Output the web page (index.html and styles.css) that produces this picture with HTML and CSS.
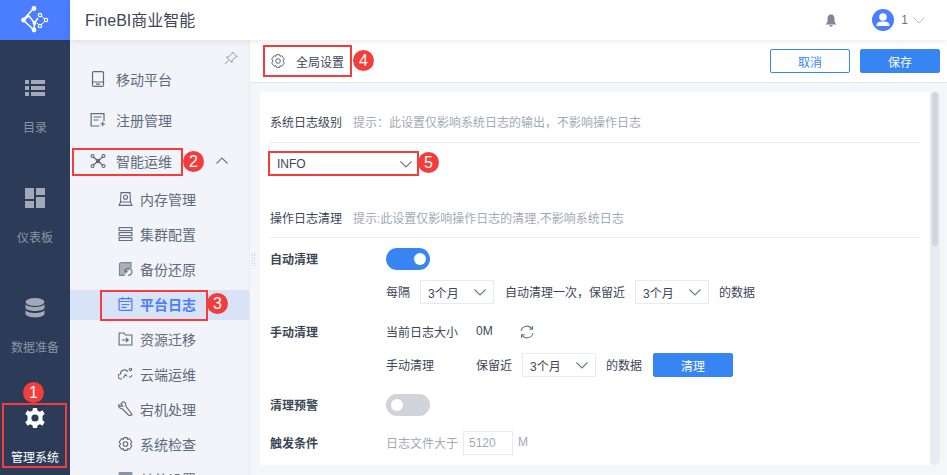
FILE: index.html
```html
<!DOCTYPE html>
<html lang="zh-CN">
<head>
    <meta charset="UTF-8">
    <title>FineBI商业智能</title>
    <link rel="stylesheet" href="styles.css">
</head>
<body>

    <div class="app">
        <aside class="rail">
            <div class="logo">
                <svg width="28" height="28" viewBox="0 0 28 28" fill="none" stroke="#fff">
                    <path d="M13 2 L2 14 L13 24 M2 14 L8 10 L13.500 17 L17 12 M13.500 17 L13 24" stroke-width="1.600"/>
                    <path d="M17 8 L19 9 L25 14 L19 20 L16 17" stroke-width="1"/>
                    <g fill="#fff" stroke="none">
                        <circle cx="13" cy="2.500" r="2.400"/>
                        <circle cx="2.500" cy="14" r="2.400"/>
                        <circle cx="13" cy="24" r="2.400"/>
                        <circle cx="13.500" cy="17" r="2"/>
                    </g>
                    <g fill="#4a7dff" stroke-width="1.200">
                        <circle cx="19" cy="9" r="1.700"/>
                        <circle cx="25" cy="14" r="1.700"/>
                        <circle cx="19" cy="20" r="1.700"/>
                    </g>
                </svg>
            </div>
            <a class="rail-item">
                <svg width="20" height="16" viewBox="0 0 20 16" fill="#a3a9b6">
                    <rect x="0" y="0" width="4" height="4"/><rect x="6" y="0" width="14" height="4"/>
                    <rect x="0" y="6" width="4" height="4"/><rect x="6" y="6" width="14" height="4"/>
                    <rect x="0" y="12" width="4" height="4"/><rect x="6" y="12" width="14" height="4"/>
                </svg>
                <span>目录</span>
            </a>
            <a class="rail-item">
                <svg width="20" height="20" viewBox="0 0 20 20" fill="#a3a9b6">
                    <rect x="0" y="0" width="9" height="11"/><rect x="11" y="0" width="9" height="7"/>
                    <rect x="0" y="13" width="9" height="7"/><rect x="11" y="9" width="9" height="11"/>
                </svg>
                <span>仪表板</span>
            </a>
            <a class="rail-item">
                <svg width="20" height="20" viewBox="0 0 20 20" fill="#a3a9b6">
                    <ellipse cx="10" cy="4" rx="9.500" ry="4"/>
                    <path d="M0.500 6 C2 10 18 10 19.500 6 V10 C18 14 2 14 0.500 10 Z"/>
                    <path d="M0.500 12 C2 16 18 16 19.500 12 V16 C18 20.500 2 20.500 0.500 16 Z"/>
                </svg>
                <span>数据准备</span>
            </a>
            <a class="rail-item active">
                <svg width="20" height="20" viewBox="0 0 20 20">
                    <path fill="#fff" d="M8 0 H12 L12.600 2.800 L15 3.800 L17.500 2.300 L19.700 6 L17.500 7.800 V12.200 L19.700 14 L17.500 17.700 L15 16.200 L12.600 17.200 L12 20 H8 L7.400 17.200 L5 16.200 L2.500 17.700 L0.300 14 L2.500 12.200 V7.800 L0.300 6 L2.500 2.300 L5 3.800 L7.400 2.800 Z"/>
                    <circle cx="10" cy="10" r="3.600" fill="#2c3b57"/>
                </svg>
                <span>管理系统</span>
            </a>
        </aside>

        <div class="content">
            <header class="topbar">
                <div class="brand">FineBI商业智能</div>
                <svg class="bell" width="12" height="13" viewBox="0 0 12 13" fill="#7e8796">
                    <path d="M6 0.500 C8.500 0.500 9.500 2.500 9.500 5 V8 L11.500 10.500 H0.500 L2.500 8 V5 C2.500 2.500 3.500 0.500 6 0.500 Z"/>
                    <rect x="4.500" y="11" width="3" height="1.500"/>
                </svg>
                <div class="avatar">
                    <svg width="22" height="22" viewBox="0 0 22 22" fill="#fff">
                        <circle cx="11" cy="8" r="3.800"/>
                        <path d="M4.500 17 C4.500 13 7.500 12.500 11 12.500 C14.500 12.500 17.500 13 17.500 17 Z"/>
                    </svg>
                </div>
                <span class="user-name">1</span>
                <svg class="user-arrow" width="12" height="7" viewBox="0 0 12 7" fill="none" stroke="#b9bfc9"><path d="M0.500 0.500 L6 6 L11.500 0.500"/></svg>
            </header>

            <div class="body-row">
                <nav class="side-menu">
                    <svg class="pin" width="14" height="14" viewBox="0 0 14 14" fill="none" stroke="#8a93a3">
                        <path d="M8.500 1 L13 5.500 L11.500 6 L8 9.500 L8 11.500 L2.500 6 L4.500 6 L8 2.500 Z M4.500 9.500 L1 13"/>
                    </svg>
                    <a class="menu-item">
                        <svg width="14" height="16" viewBox="0 0 14 16" fill="none" stroke="#5f6a7e" stroke-width="1.200"><rect x="1.500" y="0.600" width="11" height="14.800" rx="1.500"/><path d="M1.500 11 H12.500 M5 13.200 H9"/></svg>
                        <span>移动平台</span>
                    </a>
                    <a class="menu-item">
                        <svg width="15" height="14" viewBox="0 0 15 14" fill="none" stroke="#5f6a7e" stroke-width="1.200"><path d="M9 13 H0.600 V0.600 H13.500 V8 M3 4 H11 M3 7 H8 M10 11 H14.500 M12.200 8.800 V13.200"/></svg>
                        <span>注册管理</span>
                    </a>
                    <a class="menu-item">
                        <svg width="16" height="14" viewBox="0 0 16 14" fill="none" stroke="#5f6a7e" stroke-width="1.100"><path d="M3 2.500 L13 11.500 M13 2.500 L3 11.500"/><circle cx="2.500" cy="2" r="1.500"/><circle cx="13.500" cy="2" r="1.500"/><circle cx="2.500" cy="12" r="1.500"/><circle cx="13.500" cy="12" r="1.500"/><circle cx="8" cy="7" r="1.600" fill="#5f6a7e"/></svg>
                        <span>智能运维</span>
                        <svg class="menu-arrow" width="12" height="7" viewBox="0 0 12 7" fill="none" stroke="#6d7686" stroke-width="1.100"><path d="M0.500 6.500 L6 1 L11.500 6.500"/></svg>
                    </a>
                    <a class="sub-item">
                        <svg width="14" height="14" viewBox="0 0 14 14" fill="none" stroke="#5f6a7e" stroke-width="1.100"><path d="M2.500 0.600 H11.500 L12 10 H2 Z M0.600 13.400 L2 10 H12 L13.400 13.400 Z"/><circle cx="7" cy="5.300" r="2"/></svg>
                        <span>内存管理</span>
                    </a>
                    <a class="sub-item">
                        <svg width="14" height="14" viewBox="0 0 14 14" fill="none" stroke="#5f6a7e" stroke-width="1.100"><rect x="0.600" y="0.600" width="12.800" height="3"/><rect x="0.600" y="5.600" width="12.800" height="3"/><rect x="0.600" y="10.600" width="12.800" height="3"/></svg>
                        <span>集群配置</span>
                    </a>
                    <a class="sub-item">
                        <svg width="14" height="14" viewBox="0 0 14 14" fill="none" stroke="#7d8594" stroke-width="1.100"><path d="M6 13.400 H1 V1.500 L3 0.600 H12.500 V6" fill="#aab0bb"/><path d="M6.500 9.500 A3.500 3.500 0 1 1 9.500 13.200 M6.500 7.500 V9.800 H8.800" stroke="#5f6a7e"/></svg>
                        <span>备份还原</span>
                    </a>
                    <a class="sub-item active">
                        <svg width="14" height="14" viewBox="0 0 14 14" fill="none" stroke="#4a7dff" stroke-width="1.200"><rect x="0.600" y="1.600" width="12.800" height="11.800" rx="1"/><path d="M0.600 4.500 H13.400 M3 7.500 H11 M3 10.300 H8 M4 0 V2.500 M10 0 V2.500"/></svg>
                        <span>平台日志</span>
                    </a>
                    <a class="sub-item">
                        <svg width="14" height="14" viewBox="0 0 14 14" fill="none" stroke="#5f6a7e" stroke-width="1.100"><path d="M0.600 13 V1 H5.500 L7 3 H13.400 V13 Z M3.500 8 H9.500 M7.500 6 L9.800 8 L7.500 10"/></svg>
                        <span>资源迁移</span>
                    </a>
                    <a class="sub-item">
                        <svg width="15" height="14" viewBox="0 0 15 14" fill="none" stroke="#5f6a7e" stroke-width="1.100"><path d="M4 12 H3 A2.500 2.500 0 0 1 2.500 7 A4 4 0 0 1 10 5 M5 11 L7.500 7.500 L9 9.500 M11 10 A2.500 2.500 0 0 0 14 8"/><circle cx="12.500" cy="2.500" r="1.200"/></svg>
                        <span>云端运维</span>
                    </a>
                    <a class="sub-item">
                        <svg width="15" height="15" viewBox="0 0 15 15" fill="none" stroke="#5f6a7e" stroke-width="1.100"><path d="M5 0.800 L2.800 3 L4.800 5 L2.500 5.500 L0.800 3.800 C0.200 6 1.800 7.800 4 7.500 L10.500 14 C11.500 14.800 13 14.500 14 13.500 L7.800 5 C8 2 6.500 0.500 5 0.800 Z"/></svg>
                        <span>宕机处理</span>
                    </a>
                    <a class="sub-item">
                        <svg width="14" height="14" viewBox="0 0 14 14" fill="none" stroke="#5f6a7e" stroke-width="1.100"><path d="M5.500 0.600 H8.500 L9 2.300 L10.800 1.700 L13.300 5 L12 7 L13.300 9 L10.800 12.300 L9 11.700 L8.500 13.400 H5.500 L5 11.700 L3.200 12.300 L0.700 9 L2 7 L0.700 5 L3.200 1.700 L5 2.300 Z"/><circle cx="7" cy="7" r="2.300"/></svg>
                        <span>系统检查</span>
                    </a>
                    <a class="sub-item">
                        <svg width="14" height="14" viewBox="0 0 14 14" fill="#8a93a3"><rect x="0" y="0" width="14" height="14" rx="1"/></svg>
                        <span>其他设置</span>
                    </a>
                </nav>

                <main class="main">
                    <div class="main-head">
                        <div class="head-title">
                            <svg width="14" height="14" viewBox="0 0 14 14" fill="none" stroke="#5f6a7e" stroke-width="1"><path d="M5.500 0.600 H8.500 L9 2.300 L10.800 1.700 L13.300 5 L12 7 L13.300 9 L10.800 12.300 L9 11.700 L8.500 13.400 H5.500 L5 11.700 L3.200 12.300 L0.700 9 L2 7 L0.700 5 L3.200 1.700 L5 2.300 Z"/><circle cx="7" cy="7" r="2.300"/></svg>
                            <span>全局设置</span>
                        </div>
                        <button class="btn btn-cancel">取消</button>
                        <button class="btn btn-save">保存</button>
                    </div>

                    <div class="panel-wrap">
                        <div class="grip"></div>
                        <section class="panel">
                            <div class="section-title">
                                <span>系统日志级别</span>
                                <span class="hint">提示&#65306;此设置仅影响系统日志的输出&#65292;不影响操作日志</span>
                            </div>
                            <div class="select select-level">
                                <span>INFO</span>
                                <svg width="12" height="7" viewBox="0 0 12 7" fill="none" stroke="#6d7686" stroke-width="1.100"><path d="M0.500 0.500 L6 6 L11.500 0.500"/></svg>
                            </div>

                            <div class="section-title second">
                                <span>操作日志清理</span>
                                <span class="hint">提示:此设置仅影响操作日志的清理,不影响系统日志</span>
                            </div>

                            <div class="form-row row-auto">
                                <label>自动清理</label>
                                <div class="toggle on"></div>
                            </div>
                            <div class="form-row row-every">
                                <label></label>
                                <span class="w-every">每隔</span>
                                <div class="select select-month"><span>3个月</span><svg width="12" height="7" viewBox="0 0 12 7" fill="none" stroke="#6d7686" stroke-width="1.100"><path d="M0.500 0.500 L6 6 L11.500 0.500"/></svg></div>
                                <span class="w-once">自动清理一次&#65292;保留近</span>
                                <div class="select select-month"><span>3个月</span><svg width="12" height="7" viewBox="0 0 12 7" fill="none" stroke="#6d7686" stroke-width="1.100"><path d="M0.500 0.500 L6 6 L11.500 0.500"/></svg></div>
                                <span class="w-data">的数据</span>
                            </div>
                            <div class="form-row row-size">
                                <label>手动清理</label>
                                <span class="w-col">当前日志大小</span>
                                <span class="w-size">0M</span>
                                <svg width="14" height="14" viewBox="0 0 14 14" fill="none" stroke="#6d7686" stroke-width="1.100"><path d="M1 6 A6 6 0 0 1 12 4 M13 8 A6 6 0 0 1 2 10 M12.500 1 V4.300 H9.300 M1.500 13 V9.700 H4.700"/></svg>
                            </div>
                            <div class="form-row row-manual">
                                <label></label>
                                <span class="w-col">手动清理</span>
                                <span class="w-keep">保留近</span>
                                <div class="select select-month"><span>3个月</span><svg width="12" height="7" viewBox="0 0 12 7" fill="none" stroke="#6d7686" stroke-width="1.100"><path d="M0.500 0.500 L6 6 L11.500 0.500"/></svg></div>
                                <span class="w-data">的数据</span>
                                <button class="btn btn-clean">清理</button>
                            </div>
                            <div class="form-row row-warn">
                                <label>清理预警</label>
                                <div class="toggle"></div>
                            </div>
                            <div class="form-row row-trigger">
                                <label>触发条件</label>
                                <span class="w-file">日志文件大于</span>
                                <div class="size-input">5120</div>
                                <span>M</span>
                            </div>
                        </section>
                        <div class="scrollbar"><div class="thumb"></div></div>
                    </div>
                </main>
            </div>
        </div>

        <!-- annotations over the screenshot -->
        <div class="mark mark-gear"></div><div class="num num-1">1</div>
        <div class="mark mark-ops"></div><div class="num num-2">2</div>
        <div class="mark mark-log"></div><div class="num num-3">3</div>
        <div class="mark mark-global"></div><div class="num num-4">4</div>
        <div class="mark mark-info"></div><div class="num num-5">5</div>
    </div>

</body>
</html>
```

FILE: styles.css
```css
* {
    box-sizing: border-box;
}
html, body {
    margin: 0;
    padding: 0;
    height: 100%;
    overflow: hidden;
}
body {
    font-family: "Liberation Sans", "Noto Sans CJK SC", sans-serif;
    font-size: 12px;
    color: #3d4657;
}
.app {
    position: relative;
    display: flex;
    height: 475px;
    overflow: hidden;
}

/* left rail */
.rail {
    width: 70px;
    flex: none;
    background: #2c3b57;
}
.logo {
    height: 40px;
    background: #4a7dff;
    display: flex;
    align-items: center;
    justify-content: center;
}
.rail-item {
    height: 110px;
    padding-top: 38px;
    display: flex;
    flex-direction: column;
    align-items: center;
    color: #8d95a5;
}
.rail-item svg {
    height: 20px;
}
.rail-item span {
    margin-top: 22px;
    line-height: 17px;
}
.rail-item.active {
    color: #fff;
}

/* top bar */
.content {
    flex: 1;
    display: flex;
    flex-direction: column;
    min-width: 0;
}
.topbar {
    height: 40px;
    flex: none;
    display: flex;
    align-items: center;
    background: #fff;
    box-shadow: 0 1px 6px rgba(40, 50, 70, 0.12);
    position: relative;
    z-index: 2;
    padding-left: 15px;
}
.brand {
    font-size: 16px;
    flex: 1;
    color: #3d4657;
    padding-bottom: 2px;
}
.bell {
    margin-right: 35px;
}
.avatar {
    width: 22px;
    height: 22px;
    border-radius: 50%;
    background: #4a7dff;
    margin-right: 7px;
}
.user-name {
    color: #6b7484;
    margin-right: 5px;
}
.user-arrow {
    margin-right: 22px;
}

/* second level menu */
.body-row {
    flex: 1;
    display: flex;
    min-height: 0;
}
.side-menu {
    width: 179px;
    flex: none;
    background: #f2f4f9;
    position: relative;
    padding-top: 18px;
}
.pin {
    position: absolute;
    top: 11px;
    right: 11px;
}
.side-menu a {
    display: flex;
    align-items: center;
    color: #5f6a7e;
}
.menu-item {
    height: 41px;
    font-size: 14px;
    padding-left: 20px;
}
.menu-item svg:first-child {
    width: 16px;
    margin-right: 10px;
}
.menu-arrow {
    margin-left: 44px;
}
.sub-item {
    height: 35px;
    font-size: 14px;
    padding-left: 48px;
}
.sub-item svg {
    width: 15px;
    margin-right: 7px;
}
.side-menu a.active {
    background: #d8e3f8;
    color: #4a7dff;
    font-weight: bold;
    height: 30px;
    margin: 3.500px 0 1.500px;
    padding-bottom: 2px;
}

/* main */
.main {
    flex: 1;
    min-width: 0;
    display: flex;
    flex-direction: column;
    background: #f5f6f9;
    border-left: 1px solid #e6e9ef;
}
.main-head {
    height: 43px;
    flex: none;
    background: #fff;
    border-bottom: 1px solid #e4e7ed;
    display: flex;
    align-items: center;
    padding: 0 7px 0 21px;
}
.head-title {
    flex: 1;
    display: flex;
    align-items: center;
    gap: 11px;
    color: #3d4657;
}
.btn {
    font: inherit;
    height: 24px;
    width: 80px;
    border-radius: 2px;
    border: 1px solid #3685f2;
    background: #3685f2;
    color: #fff;
    padding: 0;
}
.btn-cancel {
    background: #fff;
    color: #3685f2;
    margin-right: 10px;
}
.panel-wrap {
    flex: 1;
    position: relative;
    display: flex;
    padding: 9px 7px 10px 10px;
    min-height: 0;
}
.grip {
    position: absolute;
    left: 1px;
    top: 169px;
    width: 5px;
    height: 14px;
    background-image: radial-gradient(#a7adb8 0.6px, transparent 0.7px);
    background-size: 2.500px 2.500px;
}
.panel {
    flex: 1;
    background: #fff;
    padding: 0 10px;
    min-width: 0;
}
.scrollbar {
    width: 10px;
    flex: none;
    background: #e9ebf0;
    border-radius: 5px;
    padding: 0 2px;
}
.thumb {
    height: 154px;
    background: #d3d6dd;
    border-radius: 3px;
}

/* sections */
.section-title {
    height: 51px;
    padding-top: 22px;
    line-height: 18px;
    border-bottom: 1px solid #e9ebef;
    display: flex;
    gap: 11px;
}
.section-title.second {
    height: 45px;
    padding-top: 17px;
    margin-top: 17px;
}
.hint {
    color: #a2a9b6;
}
.select {
    border: 1px solid #e8eaee;
    height: 24px;
    background: #fff;
    display: flex;
    align-items: center;
    justify-content: space-between;
    padding: 0 7px 0 7px;
    flex: none;
}
.select-level {
    width: 148px;
    margin-top: 9px;
    border: 0;
    padding-right: 6px;
}
.select-month {
    width: 74px;
}
.form-row {
    display: flex;
    align-items: center;
}
.form-row > label,
.form-row > span {
    padding-bottom: 2px;
}
.form-row > label {
    width: 116px;
    flex: none;
    font-weight: bold;
}
.toggle {
    width: 44px;
    height: 22px;
    border-radius: 11px;
    background: #d0d3da;
    position: relative;
}
.toggle::after {
    content: "";
    position: absolute;
    top: 5px;
    left: 5px;
    width: 12px;
    height: 12px;
    border-radius: 50%;
    background: #fff;
}
.toggle.on {
    background: #3685f2;
}
.toggle.on::after {
    left: 28px;
}
.row-auto {
    margin-top: 10px;
    height: 22px;
}
.row-every {
    margin-top: 10px;
    height: 24px;
}
.w-every {
    width: 34px;
}
.w-once {
    width: 141px;
    padding-left: 11px;
}
.w-data {
    margin-left: 10px;
}
.row-size {
    margin-top: 17px;
    height: 22px;
}
.w-col {
    width: 90px;
}
.w-size {
    width: 44px;
}
.row-manual {
    margin-top: 10px;
    height: 24px;
}
.w-keep {
    width: 46px;
}
.btn-clean {
    margin-left: 11px;
}
.row-warn {
    margin-top: 17px;
    height: 22px;
}
.row-trigger {
    margin-top: 15px;
    height: 24px;
    color: #a2a9b6;
}
.row-trigger label {
    color: #3d4657;
}
.w-file {
    width: 77px;
}
.size-input {
    width: 50px;
    height: 24px;
    line-height: 22px;
    border: 1px solid #e8eaee;
    padding-left: 5px;
    margin-right: 5px;
}

/* red annotations */
.mark {
    position: absolute;
    border: 2px solid #f33c3c;
}
.mark-gear { left: 2px; top: 403px; width: 65px; height: 65px; }
.mark-ops { left: 72px; top: 148px; width: 111px; height: 28px; }
.mark-log { left: 100px; top: 290px; width: 108px; height: 31px; }
.mark-global { left: 263px; top: 45px; width: 89px; height: 32px; }
.mark-info { left: 268px; top: 151px; width: 151px; height: 25px; }
.num {
    position: absolute;
    width: 21px;
    height: 21px;
    border-radius: 50%;
    background: #f33c3c;
    color: #fff;
    font-size: 16px;
    line-height: 21px;
    text-align: center;
}
.num-1 { left: 23px; top: 382px; }
.num-2 { left: 183px; top: 151px; }
.num-3 { left: 207px; top: 293px; }
.num-4 { left: 353px; top: 50px; }
.num-5 { left: 418px; top: 152px; }
```
